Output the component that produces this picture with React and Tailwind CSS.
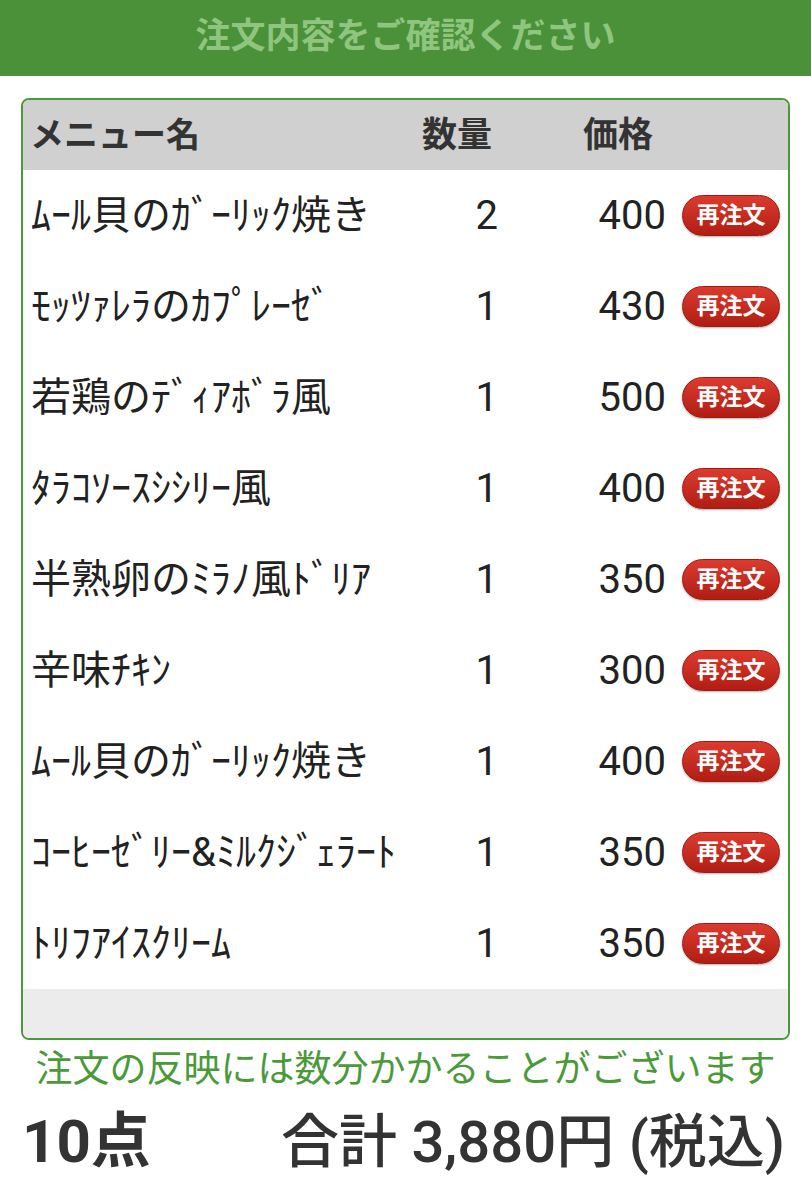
import React from "react";

const items = [
  { name: "ﾑｰﾙ貝のｶﾞｰﾘｯｸ焼き", qty: 2, price: 400 },
  { name: "ﾓｯﾂｧﾚﾗのｶﾌﾟﾚｰｾﾞ", qty: 1, price: 430 },
  { name: "若鶏のﾃﾞｨｱﾎﾞﾗ風", qty: 1, price: 500 },
  { name: "ﾀﾗｺｿｰｽｼｼﾘｰ風", qty: 1, price: 400 },
  { name: "半熟卵のﾐﾗﾉ風ﾄﾞﾘｱ", qty: 1, price: 350 },
  { name: "辛味ﾁｷﾝ", qty: 1, price: 300 },
  { name: "ﾑｰﾙ貝のｶﾞｰﾘｯｸ焼き", qty: 1, price: 400 },
  { name: "ｺｰﾋｰｾﾞﾘｰ&ﾐﾙｸｼﾞｪﾗｰﾄ", qty: 1, price: 350 },
  { name: "ﾄﾘﾌｱｲｽｸﾘｰﾑ", qty: 1, price: 350 },
];

const font = "font-['Roboto','Noto_Sans_CJK_JP',sans-serif]";

function ReorderButton() {
  return (
    <button className="ml-4 flex h-[41px] w-[98px] items-center justify-center rounded-full border border-[#9e1a12] bg-gradient-to-b from-[#dc3b2e] to-[#b11d13] text-[23px] leading-none font-bold text-white shadow-[0_1px_2px_rgba(0,0,0,0.3)]">
      再注文
    </button>
  );
}

export default function App() {
  return (
    <div className={`${font} min-h-[1200px] w-[811px] bg-white text-[#222]`}>
      {/* title bar */}
      <div className="flex h-[76px] items-center justify-center bg-[#4a9139]">
        <h1 className="-mt-1 text-[35px] leading-none font-bold text-[#8fc57f]">注文内容をご確認ください</h1>
      </div>

      {/* order table */}
      <div className="mx-[21px] mt-[22px] overflow-hidden rounded-lg border-2 border-[#4a9a3a]">
        <div className="flex h-[70px] items-center bg-[#d0d0d0] text-[35px] leading-none font-bold text-[#333]">
          <span className="w-[399px] pl-[7px] text-[34px]">メニュー名</span>
          <span className="w-[161px]">数量</span>
          <span>価格</span>
        </div>
        {items.map((it, i) => (
          <div key={i} className="flex h-[91px] items-center pl-[8px] pr-[8px] text-[40px] leading-none">
            <span className="flex-1 whitespace-nowrap">{it.name}</span>
            <span className="w-[80px] text-right">{it.qty}</span>
            <span className="w-[168px] text-right">{it.price}</span>
            <ReorderButton />
          </div>
        ))}
        <div className="h-[49px] bg-[#ececec]" />
      </div>

      <p className="mt-[10px] text-center text-[37px] leading-[40px] text-[#4a9a3a]">注文の反映には数分かかることがございます</p>

      <div className="mt-[22px] flex items-center justify-between pl-[22px] pr-[26px] leading-none text-[#333]">
        <span className="text-[60px] font-bold">10点</span>
        <span className="text-[58px] font-medium">合計 3,880円 (税込)</span>
      </div>
    </div>
  );
}
